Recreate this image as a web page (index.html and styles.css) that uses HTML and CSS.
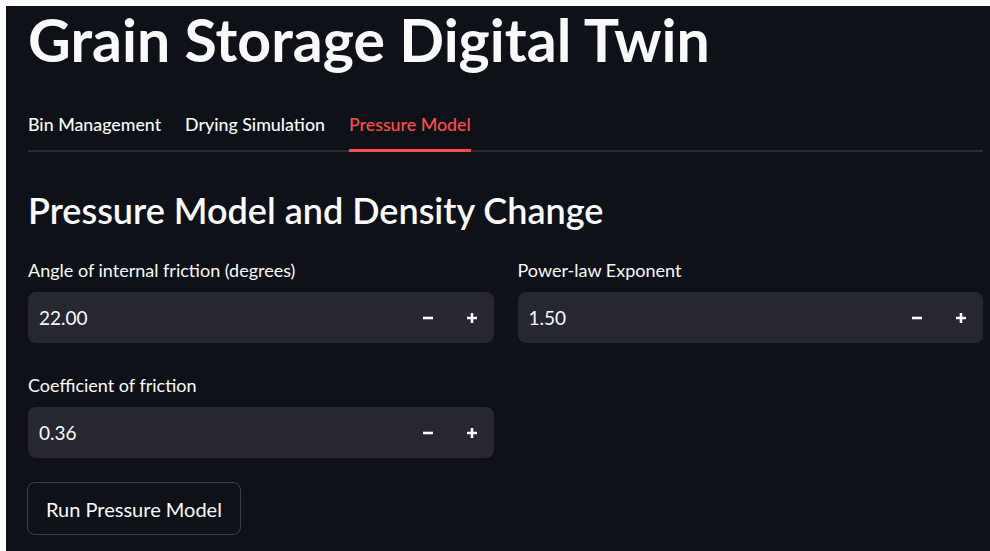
FILE: index.html
```html
<!DOCTYPE html>
<html lang="en">
<head>
<meta charset="utf-8">
<title>Grain Storage Digital Twin</title>
<link rel="stylesheet" href="styles.css">
</head>
<body>
<div class="app">
  <main class="main">
    <h1 class="title">Grain Storage Digital Twin</h1>

    <nav class="tabs">
      <button class="tab">Bin Management</button>
      <button class="tab">Drying Simulation</button>
      <button class="tab active">Pressure Model</button>
    </nav>

    <section class="panel">
      <h2 class="subheader">Pressure Model and Density Change</h2>

      <div class="fields">
        <div class="field">
          <label class="field-label">Angle of internal friction (degrees)</label>
          <div class="number-input">
            <span class="value">22.00</span>
            <button class="step" aria-label="Decrement">
              <svg viewBox="0 0 12 12" width="12" height="12"><path d="M1 6h10" /></svg>
            </button>
            <button class="step" aria-label="Increment">
              <svg viewBox="0 0 12 12" width="12" height="12"><path d="M1 6h10M6 1v10" /></svg>
            </button>
          </div>
        </div>

        <div class="field">
          <label class="field-label">Power-law Exponent</label>
          <div class="number-input">
            <span class="value">1.50</span>
            <button class="step" aria-label="Decrement">
              <svg viewBox="0 0 12 12" width="12" height="12"><path d="M1 6h10" /></svg>
            </button>
            <button class="step" aria-label="Increment">
              <svg viewBox="0 0 12 12" width="12" height="12"><path d="M1 6h10M6 1v10" /></svg>
            </button>
          </div>
        </div>

        <div class="field">
          <label class="field-label">Coefficient of friction</label>
          <div class="number-input">
            <span class="value">0.36</span>
            <button class="step" aria-label="Decrement">
              <svg viewBox="0 0 12 12" width="12" height="12"><path d="M1 6h10" /></svg>
            </button>
            <button class="step" aria-label="Increment">
              <svg viewBox="0 0 12 12" width="12" height="12"><path d="M1 6h10M6 1v10" /></svg>
            </button>
          </div>
        </div>
      </div>

      <button class="run">Run Pressure Model</button>
    </section>
  </main>
</div>
</body>
</html>
```
FILE: styles.css
```css
* { box-sizing: border-box; }

html, body {
  margin: 0;
  background: #ffffff;
}

body {
  font-family: "Source Sans Pro", "Lato", sans-serif;
  color: #fafafa;
}

.app {
  margin: 6px 0 0 6px;
  min-height: 545px;
  background: #0e1117;
}

.main {
  padding: 4px 7px 0 22px;
}

.title {
  margin: 0;
  font-size: 59px;
  font-weight: 700;
  line-height: 59px;
  white-space: nowrap;
}

/* tab strip */
.tabs {
  margin-top: 43px;
  display: flex;
  gap: 24px;
  border-bottom: 2px solid #2a2c34;
}

.tab {
  position: relative;
  padding: 0 0 14px;
  border: 0;
  background: none;
  color: #fafafa;
  font: 500 17.8px/24px "Source Sans Pro", "Lato", sans-serif;
  cursor: pointer;
}

.tab.active {
  color: #ff4b4b;
}

.tab.active::after {
  content: "";
  position: absolute;
  left: 0;
  right: 0;
  bottom: -2px;
  height: 3px;
  background: #ff4b4b;
}

/* pressure panel */
.subheader {
  margin: 34px 0 0;
  font-size: 36px;
  font-weight: 600;
  line-height: 48px;
  white-space: nowrap;
}

.fields {
  margin-top: 24px;
  display: grid;
  grid-template-columns: 1fr 1fr;
  column-gap: 24px;
  row-gap: 30px;
}

.field {
  display: flex;
  flex-direction: column;
  gap: 10px;
}

.field-label {
  font-size: 18px;
  line-height: 24px;
}

.number-input {
  height: 51px;
  display: flex;
  align-items: center;
  background: #262730;
  border-radius: 8px;
  padding-left: 11px;
}

.value {
  flex: 1;
  font-size: 19px;
}

.step {
  width: 44px;
  height: 100%;
  display: flex;
  align-items: center;
  justify-content: center;
  border: 0;
  padding: 0;
  background: none;
  cursor: pointer;
}

.step svg path {
  stroke: #fafafa;
  stroke-width: 2.6;
  fill: none;
}

.run {
  margin-top: 24px;
  margin-left: -1px;
  height: 53px;
  padding: 0 18px;
  border: 1px solid #3d3f46;
  border-radius: 8px;
  background: #0e1117;
  color: #fafafa;
  font: 400 20px "Source Sans Pro", "Lato", sans-serif;
  cursor: pointer;
}
```
